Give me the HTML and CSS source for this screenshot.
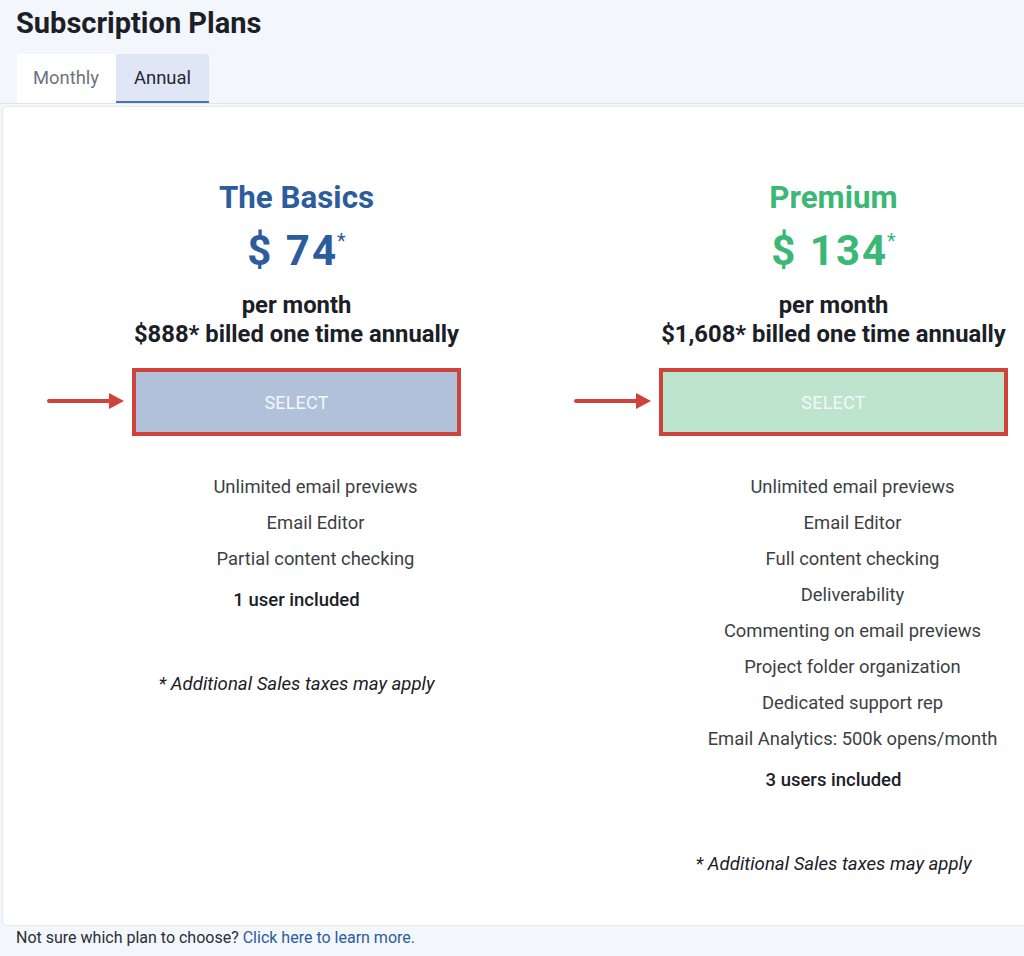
FILE: index.html
```html
<!DOCTYPE html>
<html lang="en">
<head>
<meta charset="utf-8">
<title>Subscription Plans</title>
<link rel="stylesheet" href="styles.css">
</head>
<body>
<div class="page">
  <h1 class="title">Subscription Plans</h1>
  <div class="tabs">
    <div class="tab">Monthly</div>
    <div class="tab tab-active">Annual</div>
  </div>
  <div class="card">
    <div class="col">
      <div class="plan">
        <h2 class="plan-name basics">The Basics</h2>
        <div class="price basics">$ 74<sup class="star">*</sup></div>
        <div class="billing">per month<br>$888* billed one time annually</div>
        <div class="select-wrap">
          <span class="arrow"><svg width="77" height="18" viewBox="0 0 77 18"><line x1="2" y1="9" x2="64" y2="9" stroke="#d0433a" stroke-width="4" stroke-linecap="round"/><polygon points="62,1 77,9 62,17" fill="#d0433a"/></svg></span>
          <button class="select select-basics">SELECT</button>
        </div>
        <ul class="features">
          <li>Unlimited email previews</li>
          <li>Email Editor</li>
          <li>Partial content checking</li>
        </ul>
        <div class="users">1 user included</div>
        <div class="note">* Additional Sales taxes may apply</div>
      </div>
    </div>
    <div class="col">
      <div class="plan">
        <h2 class="plan-name premium">Premium</h2>
        <div class="price premium">$ 134<sup class="star">*</sup></div>
        <div class="billing">per month<br>$1,608* billed one time annually</div>
        <div class="select-wrap">
          <span class="arrow"><svg width="77" height="18" viewBox="0 0 77 18"><line x1="2" y1="9" x2="64" y2="9" stroke="#d0433a" stroke-width="4" stroke-linecap="round"/><polygon points="62,1 77,9 62,17" fill="#d0433a"/></svg></span>
          <button class="select select-premium">SELECT</button>
        </div>
        <ul class="features">
          <li>Unlimited email previews</li>
          <li>Email Editor</li>
          <li>Full content checking</li>
          <li>Deliverability</li>
          <li>Commenting on email previews</li>
          <li>Project folder organization</li>
          <li>Dedicated support rep</li>
          <li>Email Analytics: 500k opens/month</li>
        </ul>
        <div class="users">3 users included</div>
        <div class="note">* Additional Sales taxes may apply</div>
      </div>
    </div>
  </div>
  <p class="footer">Not sure which plan to choose? <a class="link" href="#">Click here to learn more.</a></p>
</div>
</body>
</html>
```

FILE: styles.css
```css
html, body {
  margin: 0;
  padding: 0;
  overflow: hidden;
}
body {
  background: #f3f6fa;
  font-family: Roboto, "Liberation Sans", Arial, sans-serif;
  color: #1b2027;
  width: 1024px;
  height: 956px;
}
.page {
  padding-top: 6px;
}
.title {
  margin: 0 0 0 16px;
  font-size: 29px;
  line-height: 34px;
  font-weight: 700;
  color: #1b2027;
}
.tabs {
  display: flex;
  margin-top: 14px;
  padding-left: 17px;
  border-bottom: 1px solid #dfe4ea;
}
.tab {
  font-size: 18.4px;
  line-height: 47px;
  padding: 0 17px 0 16px;
  background: #ffffff;
  color: #6b7580;
  border-bottom: 2px solid transparent;
  border-radius: 3px 3px 0 0;
}
.tab-active {
  background: #dfe6f5;
  color: #1f2833;
  border-bottom-color: #4a74b4;
  padding: 0 18px 0 18px;
}
.card {
  margin: 2px 0 0 2px;
  width: 1130px;
  background: #ffffff;
  border: 1px solid #e3e8ee;
  border-radius: 5px;
  padding: 73px 0 43px 25px;
  display: flex;
}
.col {
  width: 537px;
  flex-shrink: 0;
  display: flex;
  justify-content: center;
  align-items: flex-start;
}
.plan {
  display: flex;
  flex-direction: column;
  align-items: stretch;
  text-align: center;
}
.plan-name {
  margin: 0;
  font-size: 31.3px;
  line-height: 36px;
  font-weight: 700;
}
.basics { color: #2c5c9c; }
.premium { color: #3bb776; }
.price {
  margin-top: 11px;
  font-size: 42px;
  line-height: 48px;
  font-weight: 700;
  letter-spacing: 2px;
}
.star {
  font-size: 20px;
  font-weight: 400;
  vertical-align: top;
  position: relative;
  top: -10px;
  margin-left: -1px;
  letter-spacing: 0;
}
.billing {
  margin-top: 16px;
  font-size: 23.8px;
  line-height: 29px;
  font-weight: 700;
  color: #1b2027;
  white-space: nowrap;
}
.select-wrap {
  position: relative;
  margin: 19px -2px 0 -2px;
}
.arrow {
  position: absolute;
  left: -85px;
  top: 24px;
  line-height: 0;
}
.select {
  display: block;
  width: 100%;
  height: 68px;
  box-sizing: border-box;
  border: 4px solid #d0433a;
  font-family: Roboto, "Liberation Sans", Arial, sans-serif;
  font-size: 18px;
  color: #f4f7fb;
  letter-spacing: 0.2px;
  cursor: pointer;
  padding: 0;
}
.select-basics {
  background: #b1c1d9;
}
.select-premium {
  background: #bde4cd;
}
.features {
  list-style: none;
  margin: 33px 0 0 0;
  padding: 0 0 0 38px;
}
.features li {
  font-size: 18.4px;
  line-height: 36px;
  color: #3c3f43;
  white-space: nowrap;
}
.users {
  margin-top: 5px;
  font-size: 18.5px;
  line-height: 36px;
  font-weight: 500;
  color: #1b2027;
}
.note {
  margin-top: 48px;
  font-size: 18.6px;
  line-height: 36px;
  font-style: italic;
  color: #1b2027;
  white-space: nowrap;
}
.footer {
  margin: 2px 0 0 16px;
  font-size: 16px;
  line-height: 20px;
  color: #2a2f35;
}
.link {
  color: #2c5c9c;
  text-decoration: none;
}
```
